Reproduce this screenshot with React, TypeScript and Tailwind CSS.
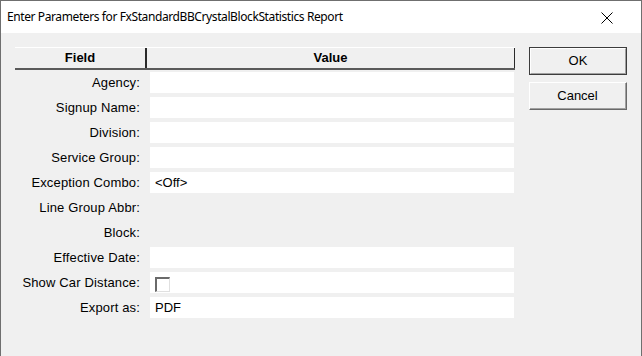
import React from "react";

const rows: { label: string; value?: string; cell: "text" | "none" | "check" }[] = [
  { label: "Agency:", cell: "text" },
  { label: "Signup Name:", cell: "text" },
  { label: "Division:", cell: "text" },
  { label: "Service Group:", cell: "text" },
  { label: "Exception Combo:", value: "<Off>", cell: "text" },
  { label: "Line Group Abbr:", cell: "none" },
  { label: "Block:", cell: "none" },
  { label: "Effective Date:", cell: "text" },
  { label: "Show Car Distance:", cell: "check" },
  { label: "Export as:", value: "PDF", cell: "text" },
];

export default function App() {
  return (
    <div
      className="w-[642px] h-[356px] overflow-hidden bg-[#f0f0f0] border-l border-r border-t border-[#6f6f6f] flex flex-col"
      style={{ fontFamily: '"Liberation Sans", Arial, sans-serif' }}
    >
      <div className="h-[32px] bg-white flex items-center justify-between pl-[6px] pr-[28px] shrink-0">
        <span
          className="text-[12px] text-black tracking-[-0.4px]"
          style={{ fontFamily: '"Noto Sans", "Open Sans", sans-serif' }}
        >
          Enter Parameters for FxStandardBBCrystalBlockStatistics Report
        </span>
        <svg width="12" height="12" viewBox="0 0 12 12" className="mt-[1px]">
          <path d="M0.5 0.5 L11.5 11.5 M11.5 0.5 L0.5 11.5" stroke="#000" strokeWidth="1" />
        </svg>
      </div>
      <div className="flex pt-[14px] pl-[14px] gap-[14px]">
        <div className="w-[500px] flex flex-col">
          <div className="h-[23px] flex bg-[#f0f0f0] border-t border-white border-b-2 border-b-[#5a5a5a] text-[13px] font-bold text-black">
            <div className="w-[132px] border-r-2 border-[#2a2a2a] flex items-center justify-center">Field</div>
            <div className="flex-1 border-r border-[#2a2a2a] flex items-center justify-center">Value</div>
          </div>
          <div className="flex flex-col gap-[4px] mt-[2px]">
            {rows.map((r) => (
              <div key={r.label} className="flex h-[21px]">
                <div className="w-[135px] pr-[10px] text-right text-[13px] tracking-[0.15px] text-black leading-[21px] whitespace-nowrap">
                  {r.label}
                </div>
                {r.cell === "none" ? null : (
                  <div className="w-[364px] bg-white flex items-center pl-[5px] text-[13px] text-black">
                    {r.cell === "check" ? (
                      <div className="w-[15px] h-[15px] mt-[4px] border-t-2 border-l-2 border-[#6a6a6a] border-r border-b border-r-[#e0e0e0] border-b-[#e0e0e0] bg-white" />
                    ) : (
                      r.value
                    )}
                  </div>
                )}
              </div>
            ))}
          </div>
        </div>
        <div className="flex flex-col gap-[7px] w-[98px]">
          <button className="h-[28px] w-[98px] border border-[#3c3c3c] bg-[#f0f0f0] p-0">
            <div className="h-full w-full border-t border-l border-white border-r border-b border-r-[#a0a0a0] border-b-[#a0a0a0] flex items-center justify-center text-[13px] text-black">
              OK
            </div>
          </button>
          <button className="h-[28px] w-[98px] border-t border-l border-white border-r border-b border-r-[#696969] border-b-[#696969] bg-[#f0f0f0] p-0">
            <div className="h-full w-full border-r border-b border-[#a0a0a0] flex items-center justify-center text-[13px] text-black">
              Cancel
            </div>
          </button>
        </div>
      </div>
    </div>
  );
}
